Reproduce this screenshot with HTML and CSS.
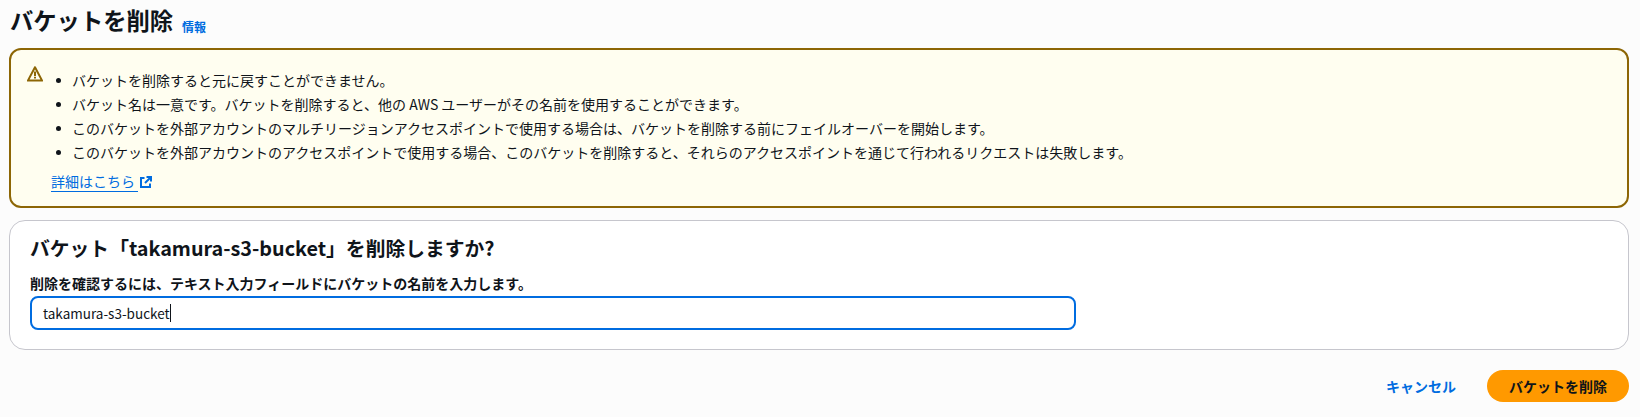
FILE: index.html
```html
<!DOCTYPE html>
<html lang="ja">
<head>
    <meta charset="UTF-8">
    <title>バケットを削除</title>
    <link rel="stylesheet" href="styles.css">
</head>
<body>
    <div class="title-row">
        <h1>バケットを削除</h1>
        <a class="info" href="#">情報</a>
    </div>

    <div class="alert">
        <svg class="alert-icon" viewBox="0 0 16 16" width="16" height="16">
            <path d="M8 1.2.9 14.6h14.2z" fill="none" stroke="#8d6605" stroke-width="2" stroke-linejoin="round"/>
            <path d="M8 5.6v4.6M8 11v1.6" fill="none" stroke="#8d6605" stroke-width="2"/>
        </svg>
        <div class="alert-body">
            <ul>
                <li>バケットを削除すると元に戻すことができません。</li>
                <li>バケット名は一意です。バケットを削除すると、他の AWS ユーザーがその名前を使用することができます。</li>
                <li>このバケットを外部アカウントのマルチリージョンアクセスポイントで使用する場合は、バケットを削除する前にフェイルオーバーを開始します。</li>
                <li>このバケットを外部アカウントのアクセスポイントで使用する場合、このバケットを削除すると、それらのアクセスポイントを通じて行われるリクエストは失敗します。</li>
            </ul>
            <a class="more" href="#"><span class="more-text">詳細はこちら</span>
                <svg viewBox="0 0 12 12" width="12" height="12">
                    <path d="M4.5 2H1v9h9V7.5" fill="none" stroke="#006ce0" stroke-width="2"/>
                    <path d="M5 7l6-6M6.5 1H11v4.5" fill="none" stroke="#006ce0" stroke-width="2"/>
                </svg>
            </a>
        </div>
    </div>

    <div class="card">
        <h2>バケット「takamura-s3-bucket」を削除しますか?</h2>
        <label class="field-label">削除を確認するには、テキスト入力フィールドにバケットの名前を入力します。</label>
        <div class="input"><span>takamura-s3-bucket</span><i class="caret"></i></div>
    </div>

    <div class="actions">
        <a class="cancel" href="#">キャンセル</a>
        <button class="primary">バケットを削除</button>
    </div>
</body>
</html>
```

FILE: styles.css
```css
* {
    box-sizing: border-box;
}
html, body {
    height: 100%;
}
body {
    margin: 0;
    padding: 0 11px 0 9px;
    overflow: hidden;
    background-color: #fcfcfc;
    color: #0f141a;
    font-family: "Noto Sans CJK JP", sans-serif;
    font-size: 14px;
    line-height: 20px;
}
.title-row {
    display: flex;
    align-items: flex-end;
    gap: 9px;
    height: 48px;
    padding-bottom: 13px;
    padding-left: 1px;
}
h1 {
    margin: 0;
    font-size: 23.3px;
    line-height: 30px;
    font-weight: 700;
}
.info {
    margin-bottom: -2px;
    color: #006ce0;
    font-size: 12px;
    line-height: 20px;
    font-weight: 700;
    text-decoration: none;
}
.alert {
    display: flex;
    height: 160px;
    padding: 14px 16px;
    background-color: #fffef0;
    border: 2px solid #8d6605;
    border-radius: 12px;
}
.alert-icon {
    flex: none;
    margin-top: 2px;
}
.alert-body {
    margin-left: 9px;
}
ul {
    margin: 5px 0 0;
    padding: 0 0 0 4px;
    list-style: none;
}
li {
    display: flex;
    align-items: center;
    gap: 11px;
    height: 23.9px;
    line-height: 23.9px;
}
li::before {
    content: "";
    flex: none;
    width: 5px;
    height: 5px;
    border-radius: 50%;
    background-color: #0f141a;
}
.more {
    display: inline-flex;
    align-items: center;
    gap: 2px;
    margin-top: 7px;
    margin-left: -1px;
    color: #006ce0;
    text-decoration: none;
}
.more-text {
    padding-right: 3px;
    line-height: 19px;
    border-bottom: 1px solid #006ce0;
}
.card {
    height: 130px;
    margin-top: 12px;
    padding: 15px 20px;
    background-color: #fff;
    border: 1px solid #c6c6cd;
    border-radius: 16px;
}
h2 {
    margin: 0;
    font-size: 19.8px;
    line-height: 24px;
    font-weight: 700;
}
.field-label {
    display: block;
    margin-top: 13px;
    font-size: 14px;
    line-height: 20px;
    font-weight: 700;
}
.input {
    display: flex;
    align-items: center;
    width: 1046px;
    height: 34px;
    margin-top: 3px;
    padding: 0 12px 0 11px;
    border: 2px solid #006ce0;
    border-radius: 8px;
    font-size: 13.5px;
}
.caret {
    width: 1px;
    height: 18px;
    background-color: #0f141a;
}
.actions {
    display: flex;
    justify-content: flex-end;
    align-items: center;
    gap: 31px;
    margin-top: 20px;
}
.cancel {
    color: #006ce0;
    font-weight: 700;
    text-decoration: none;
}
.primary {
    width: 142px;
    height: 32px;
    border: none;
    border-radius: 16px;
    background-color: #ff9900;
    color: #0f141a;
    font: inherit;
    font-weight: 700;
}
```
